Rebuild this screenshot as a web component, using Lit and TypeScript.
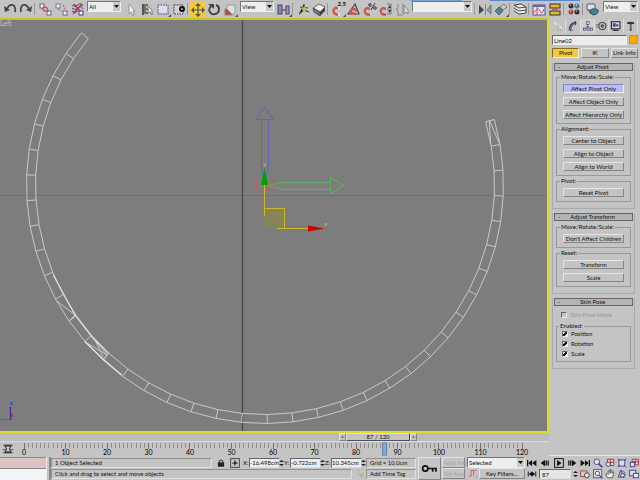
import { LitElement, html, svg, css, nothing, type TemplateResult } from "lit";
import { customElement } from "lit/decorators.js";
import { classMap } from "lit/directives/class-map.js";

const K = "#222";
const icons: Record<string, TemplateResult> = {
  undo: svg`<path d="M5 8 Q7 3 11 4 Q14 6 13 11" fill="none" stroke="#444" stroke-width="1.700"/><path d="M2 5 L3 11 L8 9Z" fill="#444"/>`,
  redo: svg`<path d="M11 8 Q9 3 5 4 Q2 6 3 11" fill="none" stroke="#444" stroke-width="1.700"/><path d="M14 5 L13 11 L8 9Z" fill="#444"/>`,
  link: svg`<rect x="3" y="3" width="4" height="4" fill="#eef" stroke="#668"/><rect x="10" y="10" width="4" height="4" fill="#eef" stroke="#668"/><path d="M6 6 Q11 5 11 11 M5 7 Q7 11 10 10" fill="none" stroke="#c44" stroke-width="1.200"/>`,
  unlink: svg`<rect x="3" y="3" width="4" height="4" fill="#eef" stroke="#779"/><rect x="10" y="10" width="4" height="4" fill="#eef" stroke="#668"/><path d="M5 8 L8 10 M10 4 L12 8" stroke="#c66" stroke-width="1.400" stroke-dasharray="2 1"/>`,
  bind: svg`<path d="M3 4 Q6 7 9 4 T14 5 M3 7 Q6 10 9 7 T14 8 M3 10 Q6 13 9 10" fill="none" stroke="#448"/><path d="M4 13 L13 3 M5 3 L12 11" stroke="#b33" stroke-width="1.300"/><rect x="10" y="10" width="4" height="4" fill="#eef" stroke="#448"/>`,
  cursor: svg`<path d="M6 3 L6 13 L8 11 L10 15 L11 14 L10 10 L12 10Z" fill="#eee" stroke="#888" stroke-width=".8"/>`,
  byname: svg`<path d="M3 4h6M3 6h4M3 8h6M3 10h4M3 12h6" stroke="${K}" stroke-width="1.200"/><path d="M4 3v11" stroke="#555" stroke-width="2"/><path d="M9 5 L9 13 L11 11 L13 14 L13 9Z" fill="#ddd" stroke="#666" stroke-width=".7"/>`,
  region: svg`<rect x="3" y="4" width="10" height="9" fill="#dcdcec" stroke="#446" stroke-dasharray="1.500 1"/><path d="M16 13v3h-3z" fill="#555"/>`,
  crossing: svg`<rect x="3" y="4" width="9" height="9" fill="#d4d4d4" stroke="#335" stroke-dasharray="1.500 1"/><circle cx="11" cy="8" r="3" fill="#111"/><circle cx="11" cy="8" r="1" fill="#bbb"/>`,
  move: svg`<path d="M8 4v10M3 9h10" stroke="#554" stroke-width="1.200"/><path d="M8 2l3 3H5zM8 16l3-3H5zM1 9l3-3v6zM15 9l-3-3v6z" fill="#554"/>`,
  rotate: svg`<path d="M5 5 Q1 10 6 13 Q13 14 13 8 Q13 5 10 4" fill="none" stroke="#444" stroke-width="2"/><path d="M2 3h6v5z" fill="#444"/>`,
  scale: svg`<rect x="3" y="8" width="7" height="6" fill="#b64848" stroke="#888"/><path d="M5 8V4h8v9h-3" fill="#ddd" stroke="#999"/><path d="M16 13v3h-3z" fill="#555"/>`,
  pivot: svg`<rect x="2" y="4" width="4" height="9" fill="#88a" stroke="#446"/><rect x="10" y="5" width="3" height="8" fill="#99c" stroke="#446"/><path d="M6 9h4" stroke="#c33" stroke-width="1.500"/><path d="M16 13v3h-3z" fill="#555"/>`,
  manip: svg`<path d="M9 3 L9 9 L4 13 M9 9 L14 11 M5 6 L13 7" stroke="#444" stroke-width="1.100"/><circle cx="9" cy="8" r="2" fill="#d8c030"/>`,
  key: svg`<path d="M2 7 L8 3 L14 6 L9 11Z" fill="#eee" stroke="#666"/><path d="M2 7 L9 11 V15 L3 11Z" fill="#777" stroke="#555"/><path d="M9 11 L14 6 V10 L9 15Z" fill="#444"/>`,
  snap: svg`<path d="M9 14 L5 13 Q2 10 5 7 L9 7" fill="none" stroke="#c85a50" stroke-width="2.400"/><path d="M9 5v4M9 12v3" stroke="#ddd" stroke-width="2"/><path d="M16 13v3h-3z" fill="#555"/>`,
  angle: svg`<path d="M2 13 L9 3 L13 13Z" fill="none" stroke="#444" stroke-width="1.200"/><path d="M10 13 L5 12 Q4 8 8 8 L11 10" fill="none" stroke="#c85a50" stroke-width="2.400"/>`,
  percent: svg`<path d="M8 14 L4 13 Q1 9 5 7 L8 8" fill="none" stroke="#c85a50" stroke-width="2.400"/><circle cx="8" cy="4" r="1.300" fill="none" stroke="#333"/><circle cx="13" cy="7" r="1.300" fill="none" stroke="#333"/><path d="M13 2 L9 9" stroke="#333"/>`,
  spin: svg`<path d="M8 14 L4 13 Q1 9 5 7 L8 8" fill="none" stroke="#c85a50" stroke-width="2.400"/><path d="M9 3h4v10H9M9 8h4" fill="none" stroke="#777"/><path d="M10 7l1.500-3 1.500 3zM10 9l1.500 3 1.500-3z" fill="#333"/>`,
  named: svg`<path d="M5 3Q3 3 4 6Q4 8 2 8Q4 8 4 10Q3 13 5 13M8 3Q10 3 9 6V13M3 14h6" fill="none" stroke="#888"/><path d="M10 4 L10 13 L12 11 L14 13 L14 9Z" fill="#ddd" stroke="#777" stroke-width=".8"/>`,
  mirror: svg`<path d="M2 4 L7 9 L2 13Z" fill="#444"/><path d="M14 4 L10 9 L14 13Z" fill="#79a6b4" stroke="#678"/><path d="M8.500 3v11" stroke="#888"/>`,
  align: svg`<path d="M2 10 L6 6 L10 10 L6 14Z" fill="#4a8896" stroke="#466"/><path d="M7 6 L11 3 L14 6 L10 9Z" fill="#ccc" stroke="#777"/><path d="M16 13v3h-3z" fill="#555"/>`,
  layers: svg`<path d="M2 4l7-1 5 3-7 1zM2 7l5 3 7-1v-3M2 10l5 3 7-1v-3" fill="#eee" stroke="#333" stroke-width=".9"/>`,
  curve: svg`<rect x="2" y="4" width="12" height="10" fill="#e4e4f4" stroke="#558"/><path d="M2 5h12" stroke="#66a" stroke-width="2"/><path d="M3 12 Q7 5 9 10 T13 8M6 6v8" fill="none" stroke="#c55"/>`,
  schematic: svg`<rect x="3" y="3" width="10" height="4" fill="#d8c030" stroke="#333"/><rect x="5" y="7" width="6" height="2" fill="#c55"/><rect x="3" y="10" width="10" height="4" fill="#d8c030" stroke="#333"/>`,
  material: svg`<circle cx="5" cy="5" r="2.500" fill="#333"/><circle cx="11" cy="5" r="2.500" fill="#547a9a"/><circle cx="5" cy="11" r="2.500" fill="#b84040"/><circle cx="11" cy="11" r="2.500" fill="#333"/><path d="M4 4h1M10 4h1M4 10h1M10 10h1" stroke="#fff"/>`,
  render: svg`<rect x="2" y="3" width="8" height="6" rx="1" fill="#dde" stroke="#557"/><path d="M5 10 Q6 7 10 8 Q14 8 13 11 Q12 14 8 14 Q6 13 5 10Z" fill="#3e8790" stroke="#355"/><path d="M3 9 L6 13" stroke="#446"/>`,
  create: svg`<path d="M5 5 L13 12" stroke="#eee" stroke-width="2"/><path d="M7 6 L7 14 L9 12 L11 14Z" fill="#eee" stroke="#888" stroke-width=".7"/><path d="M3 2v4M1 4h4" stroke="#eed"/>`,
  modify: svg`<path d="M4 14 Q4 5 13 3" fill="none" stroke="#335" stroke-width="3.500"/><path d="M4 13 Q5 6 12 4" fill="none" stroke="#8ab" stroke-width="1.200"/><path d="M12 2v5M4 14h4" stroke="#333"/>`,
  hierarchy: svg`<path d="M8 4v4M8 8L4 12M8 8L12 12M8 8v4" stroke="#445"/><rect x="6" y="2" width="4" height="4" fill="#dde" stroke="#446"/><rect x="2" y="11" width="3" height="3" fill="#dde" stroke="#446"/><rect x="7" y="11" width="3" height="3" fill="#dde" stroke="#446"/><rect x="12" y="11" width="3" height="3" fill="#dde" stroke="#446"/>`,
  motion: svg`<circle cx="9" cy="8" r="5" fill="#ccc" stroke="#444" stroke-width="1.500"/><circle cx="9" cy="8" r="2" fill="#888" stroke="#222"/><path d="M0 6h4M0 9h3" stroke="#555"/>`,
  display: svg`<rect x="2" y="2" width="12" height="10" fill="#cdd" stroke="#224" stroke-width="1.500"/><rect x="4" y="4" width="4" height="5" fill="#44a"/><circle cx="10" cy="7" r="2" fill="#c33"/><path d="M4 14h8" stroke="#333" stroke-width="2"/>`,
  utility: svg`<path d="M3 3 Q8 1 13 3 L13 5 H3Z" fill="#333"/><path d="M8 5v10" stroke="#444" stroke-width="2.500"/><path d="M8 6v6" stroke="#c77"/>`,
  mini: svg`<path d="M2 3h12M2 13h12" stroke="${K}" stroke-width="1.600"/><path d="M4 4 L6 8 L4 12H12L10 8L12 4Z" fill="none" stroke="${K}" stroke-width="1.300"/><path d="M1 9h4M11 9h4" stroke="${K}"/>`,
  lock: svg`<path d="M5 8V5Q8 1 11 5V8" fill="none" stroke="${K}" stroke-width="1.600"/><rect x="3" y="7" width="10" height="7" fill="${K}"/>`,
  absolute: svg`<rect x="1" y="1" width="14" height="14" fill="none" stroke="#444" stroke-width="1.500"/><path d="M8 4v8M4 8h8" stroke="${K}" stroke-width="2"/>`,
  bigkey: svg`<circle cx="4" cy="8" r="2.500" fill="none" stroke="#111" stroke-width="1.600"/><path d="M6 8h9M11 8v3M14 8v3" stroke="#111" stroke-width="1.600"/>`,
  tangent: svg`<path d="M1 13H5V4H9V12" fill="none" stroke="#c55" stroke-width="1.300"/><path d="M8 4h6M13 14h2" stroke="#c55"/>`,
  tag: svg`<path d="M4 2h5l3 4-3 4v4M4 7l4 4" fill="none" stroke="#999" stroke-width="1.500"/><path d="M6 3h5l3 4" fill="none" stroke="#eec"/>`,
  start: svg`<path d="M1 3v10" stroke="#111" stroke-width="2"/><path d="M8 3v10L2 8zM15 3v10L8 8z" fill="#111"/>`,
  prev: svg`<path d="M8 3v10L1 8z" fill="#111"/><path d="M10 4v8M13 4v8" stroke="#111" stroke-width="2"/>`,
  play: svg`<rect x="1" y="1" width="14" height="14" fill="none" stroke="#111" stroke-width="1.500"/><path d="M5 3v10l7-5z" fill="#111"/>`,
  next: svg`<path d="M8 3v10L15 8z" fill="#111"/><path d="M6 4v8M3 4v8" stroke="#111" stroke-width="2"/>`,
  end: svg`<path d="M15 3v10" stroke="#111" stroke-width="2"/><path d="M8 3v10L14 8zM1 3v10L8 8z" fill="#111"/>`,
  keymode: svg`<path d="M2 4v8M14 4v8" stroke="#111" stroke-width="1.500"/><path d="M8 4v8L3 8zM8 4v8L13 8z" fill="#111"/>`,
  timecfg: svg`<rect x="1" y="3" width="10" height="9" fill="#dcc" stroke="#a44" stroke-width="1.500"/><circle cx="11" cy="10" r="4" fill="#ddd" stroke="#444" stroke-width="1.500"/>`,
  zoom: svg`<circle cx="6" cy="6" r="4.500" fill="#e6e6f2" stroke="#448" stroke-width="1.500"/><path d="M9 9l6 6" stroke="#448" stroke-width="2.500"/>`,
  zoomall: svg`<path d="M4 2h10v10H4zM9 2v10M4 7h10" fill="#ecd6d6" stroke="#a33" stroke-width="1.500"/><circle cx="5" cy="10" r="3.500" fill="#dde" stroke="#448" stroke-width="1.500"/>`,
  extents: svg`<path d="M3 3L13 3L12 13L3 13Z" fill="#dde" stroke="#448" stroke-width="1.500"/><path d="M1 1l4 4M15 1l-4 4M1 15l4-4M15 15l-4-4" stroke="#448" stroke-width="1.500"/>`,
  extall: svg`<path d="M5 2h10v9H5zM10 2v9M5 6h10" fill="#ecd6d6" stroke="#a33" stroke-width="1.500"/><rect x="2" y="7" width="7" height="7" fill="#dde" stroke="#448" stroke-width="1.500"/>`,
  zregion: svg`<rect x="1" y="1" width="13" height="13" fill="#ddd" stroke="#444" stroke-width="1.200"/><circle cx="7" cy="7" r="3.500" fill="#eef" stroke="#448" stroke-width="1.500"/><path d="M10 10l5 5" stroke="#448" stroke-width="2"/>`,
  pan: svg`<path d="M4 14L1 8L3 7L5 9V3L7 2L8 7L9 1L11 2V7L13 4L14 5L12 14Z" fill="#eee" stroke="#444" stroke-width="1.200"/>`,
  arc: svg`<path d="M6 2L2 13H12Z" fill="none" stroke="#448" stroke-width="1.500"/><circle cx="9" cy="10" r="3" fill="#dde" stroke="#448" stroke-width="1.500"/><path d="M6 2Q14 4 13 10" fill="none" stroke="#448"/>`,
  maximize: svg`<rect x="1" y="2" width="10" height="9" fill="#dde" stroke="#448" stroke-width="1.500"/><rect x="7" y="7" width="8" height="7" fill="#eef" stroke="#448" stroke-width="1.500"/>`,
};

const icon = (name: string) =>
  html`<svg class="icon" viewBox="0 0 16 16" aria-hidden="true">${icons[name]}</svg>`;

const base = css`
  :host, * { box-sizing: border-box; }
  .icon { display: block; width: 100%; height: 100%; }
  button, input, select { font: inherit; color: inherit; margin: 0; padding: 0; border: 0; background: none; border-radius: 0; outline: 0; min-width: 0; }
  .drop { display: flex; height: 11px; background: #eee; border: 1px solid; border-color: #777 #eee #eee #777; }
  .drop select { appearance: none; flex: 1; padding-left: 1px; line-height: 9px; }
  .drop svg { width: 7px; height: 9px; background: #c8c8c8; pointer-events: none; }
  .push { height: 9px; border: 1px solid; border-color: #e4e4e4 #858585 #858585 #e4e4e4; text-align: center; line-height: 7px; white-space: nowrap; }
  .push.picked { background: #f4c83c; border-color: #887020 #eee #eee #887020; }
  .push.active { background: #bcbcf8; border-color: #8888b8 #eee #eee #8888b8; }
  .push.off { color: #a6a6a6; }
`;

const drop = (label: string, value: string) => html`<span class="drop">
  <select aria-label=${label}><option>${value}</option></select>
  <svg viewBox="0 0 7 9" aria-hidden="true"><path d="M1 3h5L3.500 6z" fill="#111" /></svg></span>`;

@customElement("main-toolbar")
class MainToolbar extends LitElement {
  static styles = [base, css`
    :host { display: flex; height: 18px; padding: 1px 0 0 2px; background:
      linear-gradient(#78a0cc, #78a0cc) 410px 0 / 52px 1px no-repeat,
      linear-gradient(#5888cc, #5888cc) 490px 0 / 90px 1px no-repeat, #c4c4c4; }
    .tool { position: relative; flex: none; width: 16px; height: 16px; }
    .tool.on { background: #f4c840; }
    .caption { position: absolute; top: 0; right: 0; font-size: 6px; font-weight: bold; line-height: 6px; }
    .sep { flex: none; width: 3px; height: 12px; margin-top: 2px; border-left: 1px solid #999; }
    .drop { margin: 0 2px; flex: none; }
    .short .drop { width: 34px; }
    .wide .drop { width: 60px; }
    .fill { flex: 1; min-width: 0; }
  `];
  tool(name: string) {
    return html`<button class=${classMap({ tool: true, on: name === "move" })} aria-label=${name}>${icon(name)}${name === "snap" ? html`<span class="caption">2.5</span>` : nothing}</button>`;
  }
  render() {
    const t = (s: string) => s.split(" ").map((n) => (n === "|" ? html`<span class="sep"></span>` : this.tool(n)));
    return html`${t("undo redo | link unlink bind")}
      <span class="short">${drop("Selection filter", "All")}</span>
      ${t("cursor byname region crossing | move rotate scale")}
      <span class="short">${drop("Coordinate system", "View")}</span>
      ${t("pivot | manip key | snap angle percent spin named")}
      <span class="wide">${drop("Named selections", "")}</span>
      ${t("| mirror align | layers | curve schematic | material | render")}
      <span class="fill">${drop("Render type", "View")}</span>`;
  }
}

const CX = 265, CY = 185, STEP = 6.2, FIRST = -21, LAST = 17;
const at = (i: number, r: number) => {
  const a = ((0.55 + i * STEP) * Math.PI) / 180;
  return `${(CX + r * Math.sin(a)).toFixed(1)} ${(CY + r * Math.cos(a)).toFixed(1)}`;
};
const steps = Array.from({ length: LAST - FIRST + 1 }, (_, k) => FIRST + k);
const ring =
  [238.5, 229.5].map((r) => "M" + steps.map((i) => at(i, r)).join("L")).join("") +
  steps.map((i) => `M${at(i, 238.5)}L${at(i, 229.5)}`).join("");

@customElement("scene-view")
class SceneView extends LitElement {
  static styles = css`
    :host { display: block; box-sizing: border-box; background: #7d7d7d; border: 2px solid #dcdc20; border-left: 0; border-top-color: #c4c430; }
    svg { display: block; width: 100%; }
    .label { font-size: 7px; fill: #c4c4c4; }
    .axis { font-size: 6px; font-weight: bold; }
    .grid { stroke: #707070; }
    .main { stroke: #484848; }
    .wire { fill: none; stroke: #c8c8c8; }
    .bright { fill: none; stroke: #e0e0e0; stroke-width: 1.2; }
    .blue { fill: none; stroke: #6462b4; }
    .green { fill: none; stroke: #62b062; }
    .red { fill: none; stroke: #c06060; stroke-width: .8; }
    .gold { fill: none; stroke: #ccb820; }
  `;
  render() {
    return html`<svg viewBox="0 20 547 411" role="img" aria-label="Left viewport">
      <path class="grid" d="M0 195.500H547" />
      <path class="main" d="M242.500 20V431" stroke-width="1.300" />
      <path class="wire" d=${ring} />
      <path class="wire" d="M55.700 300L75 315L69 321M85 341.700L107 355L103 360L85 341.700M91.700 336.700L107 355M95 340L103 357M489.300 120L490.700 144.300M489.300 120L499.300 143.300" />
      <path class="bright" d="M53.300 275L75 315L91.700 336.700L108.300 353.300M85 341.700L103 359L121.700 375" />
      <path class="blue" d="M264.500 106.500L256.500 119.500H273L264.500 106.500M261.500 120V167L264.500 181L268.500 167V120" />
      <path class="green" d="M330.500 177.500L344 185.500L330.500 193.500ZM330 182.500H282L267 185.500L284 189.500H330" />
      <path class="red" d="M256.500 177.500h16.500v16h-16.500zl16.500 16M273 177.500l-16.500 16M261.500 182.500h7v7h-7z" />
      <path d="M264.500 208h20v20h-20z" fill="#878458" />
      <path class="gold" d="M264.500 185V216M264.500 208.500H284.500V228.500M277 228.500H308" />
      <path d="M264.500 168l-3.500 17h7z" fill="#00a000" />
      <path d="M308 225.500v6l16.500-3z" fill="#cc0000" />
      <text class="axis" x="263" y="166" fill="#ccb820">y</text>
      <text class="axis" x="324" y="226" fill="#ccb820">x</text>
      <path d="M0 419.500H11" stroke="#309030" />
      <path d="M10.500 407V420" stroke="#3030b0" stroke-width="1.300" />
      <path d="M12 414v3" stroke="#c03030" stroke-width="2" />
      <text class="axis" x="10" y="405" fill="#3030c0">z</text>
      <text class="label" x="0" y="26">Left</text>
    </svg>`;
  }
}

@customElement("time-ruler")
class TimeRuler extends LitElement {
  static styles = [base, css`
    :host { display: block; background: #c4c4c4; }
    .slider { display: flex; height: 9px; border-bottom: 1px solid #dadada; }
    .track { flex: 339; background: #bcbcbc; }
    .rest { flex: 132; background: #bcbcbc; }
    .slider .push { height: 8px; line-height: 6px; }
    .arrow { flex: none; width: 7px; }
    .thumb { flex: none; width: 64px; border-right-color: #444; border-bottom-color: #555; }
    .bar { display: flex; height: 14px; }
    .mini { flex: none; width: 12px; height: 12px; margin: 1px 10px 0 2px; }
    .ticks { flex: 1; margin-right: 27px; height: 14px; overflow: visible; font-size: 7px; }
    .tick { stroke: #929292; shape-rendering: crispEdges; }
    .major { stroke: #707070; }
    .now { fill: #86aad0; stroke: #6080a8; }
  `];
  render() {
    const frames = Array.from({ length: 121 }, (_, i) => i);
    return html`<div class="slider"><span class="track"></span>
        <button class="push arrow" aria-label="Previous frame">&lt;</button>
        <button class="push thumb">87 / 120</button>
        <button class="push arrow" aria-label="Next frame">&gt;</button><span class="rest"></span></div>
      <div class="bar"><button class="mini" aria-label="Open mini curve editor">${icon("mini")}</button>
        <svg class="ticks" width="100%" height="14">
          ${frames.map((f) => svg`<line class=${f % 10 ? "tick" : "tick major"} x1="${(f / 1.2).toFixed(2)}%" x2="${(f / 1.2).toFixed(2)}%" y1="1" y2=${f % 10 ? 6 : 7}></line>`)}
          <rect class="now" x="72%" y="1" width="4" height="12"></rect>
          ${frames.filter((f) => f % 10 === 0).map((f) => svg`<text x="${(f / 1.2).toFixed(2)}%" y="13" text-anchor="middle">${f}</text>`)}
        </svg></div>`;
  }
}

@customElement("command-panel")
class CommandPanel extends LitElement {
  static styles = [base, css`
    :host { display: block; background: #c4c4c4; padding: 1px 2px 0 3px; border-bottom: 1px solid #e4e4e4; }
    .tabs { display: flex; height: 14px; }
    .tab { flex: 1; height: 14px; padding: 1px; border-right: 1px solid #ddd; }
    .tab .icon { height: 12px; }
    .tab.chosen { background: #cfcfcf; }
    .object { display: flex; gap: 2px; margin-top: 2px; }
    .object input[type="text"] { flex: 1; height: 10px; padding-left: 1px; background: #ededed; border: 1px solid; border-color: #666 #eee #eee #666; }
    .swatch { width: 9px; height: 9px; background: #ffa800; border: 1px solid #d09020; }
    .modes { display: grid; grid-template-columns: repeat(3, 1fr); gap: 2px; margin: 3px 0 5px; }
    .modes .push { height: 10px; line-height: 8px; }
    .rollout { width: 83px; padding: 0 3px 6px; border: 1px solid #aaa; border-top: 0; margin-bottom: 4px; }
    .head { display: flex; width: 79px; height: 8px; margin-left: -2px; padding: 0 3px; border: 1px solid #666; background: #b4b4b4; line-height: 6px; }
    .head b { flex: 1; font-weight: normal; padding-right: 4px; text-align: center; }
    fieldset { min-width: 0; margin: 1px 0 0; padding: 3px 6px 4px; border: 1px solid #999; display: grid; gap: 4px; }
    .head + fieldset { margin-top: 2px; }
    legend { height: 8px; margin-left: -3px; padding: 0 1px; line-height: 8px; }
    .check { display: flex; align-items: center; gap: 3px; height: 6px; line-height: 6px; }
    .check.off { color: #999; margin: 5px 0 3px 5px; height: 8px; }
    .check input { appearance: none; width: 6px; height: 6px; background: #e8e8e8; border: 1px solid; border-color: #666 #eee #eee #666; }
    .check input:checked { background: linear-gradient(135deg, #eee 35%, #111 35%, #111 75%, #eee 75%); }
    .check.off input { background: #c4c4c4; }
    .checks { padding: 1px 5px 4px; }
  `];
  group(title: string, labels: string[]) {
    return html`<fieldset><legend>${title}</legend>${labels.map((l) => html`<button class=${classMap({ push: true, active: l === "Affect Pivot Only" })}>${l}</button>`)}</fieldset>`;
  }
  rollout(title: string, body: unknown) {
    return html`<section class="rollout"><button class="head"><span>-</span><b>${title}</b></button>${body}</section>`;
  }
  render() {
    return html`<nav class="tabs">${["create", "modify", "hierarchy", "motion", "display", "utility"].map((n) => html`<button class=${classMap({ tab: true, chosen: n === "hierarchy" })} aria-label=${n}>${icon(n)}</button>`)}</nav>
      <div class="object"><input type="text" aria-label="Object name" value="Line02" /><button class="swatch" aria-label="Object color"></button></div>
      <div class="modes"><button class="push picked">Pivot</button><button class="push">IK</button><button class="push">Link Info</button></div>
      ${this.rollout("Adjust Pivot", html`
        ${this.group("Move/Rotate/Scale:", ["Affect Pivot Only", "Affect Object Only", "Affect Hierarchy Only"])}
        ${this.group("Alignment:", ["Center to Object", "Align to Object", "Align to World"])}
        ${this.group("Pivot:", ["Reset Pivot"])}`)}
      ${this.rollout("Adjust Transform", html`
        ${this.group("Move/Rotate/Scale:", ["Don't Affect Children"])}
        ${this.group("Reset:", ["Transform", "Scale"])}`)}
      ${this.rollout("Skin Pose", html`
        <label class="check off"><input type="checkbox" disabled />Skin Pose Mode</label>
        <fieldset class="checks"><legend>Enabled:</legend>
          ${["Position", "Rotation", "Scale"].map((l) => html`<label class="check"><input type="checkbox" checked />${l}</label>`)}
        </fieldset>`)}`;
  }
}

@customElement("status-bar")
class StatusBar extends LitElement {
  static styles = [base, css`
    :host { display: flex; height: 24px; padding-top: 1px; background: #c4c4c4; }
    .script { flex: none; width: 47px; display: grid; grid-template-rows: 11px 12px; border-right: 1px solid #eee; }
    .script input { width: 46px; background: #f4f4f4; border-top: 1px solid #888; }
    .script .macro { background: #dcc2c2; }
    .info { flex: 1; min-width: 0; margin: 0 2px; border-left: 2px solid #888; display: grid; grid-template-rows: 11px 12px; }
    .row { display: flex; min-width: 0; align-items: center; }
    .well { height: 10px; padding-left: 3px; line-height: 8px; border: 1px solid; border-color: #909090 #e0e0e0 #e0e0e0 #909090; text-align: left; white-space: nowrap; overflow: hidden; }
    .grow { flex: 1; }
    .side { flex: none; width: 50px; }
    .small { flex: none; width: 10px; height: 10px; margin-left: 4px; }
    .coord { display: flex; flex: none; width: 41px; align-items: center; height: 10px; }
    .coord:first-of-type { margin-left: 3px; }
    .coord .name { width: 6px; }
    .coord input { width: 30px; height: 10px; background: #ececec; border: 1px solid; border-color: #666 #ddd #ddd #666; border-right: 0; }
    .spinner { width: 5px; height: 8px; }
    .keyb { flex: none; width: 23px; height: 23px; padding: 2px; margin-right: 1px; }
    .keys { flex: none; width: 83px; display: grid; grid-template-columns: 23px 1fr; grid-template-rows: 11px 12px; column-gap: 2px; }
    .keys .push, .keys .drop { height: 11px; line-height: 9px; }
    .filters { display: flex; gap: 1px; }
    .filters .push { flex: 1; }
    .filters .small { margin-left: 1px; }
    .play { flex: none; width: 63px; margin: 0 2px; display: grid; grid-template-rows: 11px 12px; }
    .play .row { justify-content: space-between; }
    .play .small, .nav .small { margin: 0; }
    .frame { width: 32px; height: 10px; padding-left: 2px; background: #e6e6e6; border: 1px solid; border-color: #666 #ddd #ddd #666; }
    .nav { flex: none; width: 48px; display: grid; grid-template-columns: repeat(4, 12px); grid-template-rows: 11px 12px; place-items: center; }
  `];
  btn(n: string) { return html`<button class="small" aria-label=${n}>${icon(n)}</button>`; }
  spinner() { return html`<svg class="spinner" viewBox="0 0 5 8" aria-hidden="true"><path d="M0 3h5L2.500 1zM0 5h5L2.500 7z" fill="#222" /></svg>`; }
  render() {
    return html`<div class="script"><input class="macro" aria-label="Macro recorder" /><input aria-label="Script listener" /></div>
      <div class="info">
        <div class="row"><span class="well grow">1 Object Selected</span>${this.btn("lock")}${this.btn("absolute")}
          ${[["X:", "-16.498cm"], ["Y:", "-0.722cm"], ["Z:", "10.345cm"]].map(([n, v]) => html`<label class="coord"><span class="name">${n}</span><input value=${v} />${this.spinner()}</label>`)}
          <span class="well side">Grid = 10.0cm</span></div>
        <div class="row"><span class="well grow">Click and drag to select and move objects</span>${this.btn("tag")}<button class="well side">Add Time Tag</button></div>
      </div>
      <button class="push keyb" aria-label="Set keys">${icon("bigkey")}</button>
      <div class="keys"><button class="push off">Auto Key</button>${drop("Key set", "Selected")}
        <button class="push off">Set Key</button><span class="filters">${this.btn("tangent")}<button class="push">Key Filters...</button></span></div>
      <div class="play"><div class="row">${["start", "prev", "play", "next", "end"].map((n) => this.btn(n))}</div>
        <div class="row">${this.btn("keymode")}<input class="frame" aria-label="Current frame" value="87" />${this.spinner()}${this.btn("timecfg")}</div></div>
      <div class="nav">${["zoom", "zoomall", "extents", "extall", "zregion", "pan", "arc", "maximize"].map((n) => this.btn(n))}</div>`;
  }
}

@customElement("app-root")
class AppRoot extends LitElement {
  static styles = css`
    :host { display: flex; flex-direction: column; min-height: 100vh; background: #c4c4c4; color: #101010; font: 6px/8px Lato, "Liberation Sans", sans-serif; }
    .body { display: flex; flex: 1; }
    .left { flex: 1; min-width: 0; display: flex; flex-direction: column; }
    scene-view { flex: 1; }
    command-panel { flex: none; width: 91px; }
  `;
  render() {
    return html`<main-toolbar></main-toolbar>
      <div class="body"><div class="left"><scene-view></scene-view><time-ruler></time-ruler></div><command-panel></command-panel></div>
      <status-bar></status-bar>`;
  }
}
